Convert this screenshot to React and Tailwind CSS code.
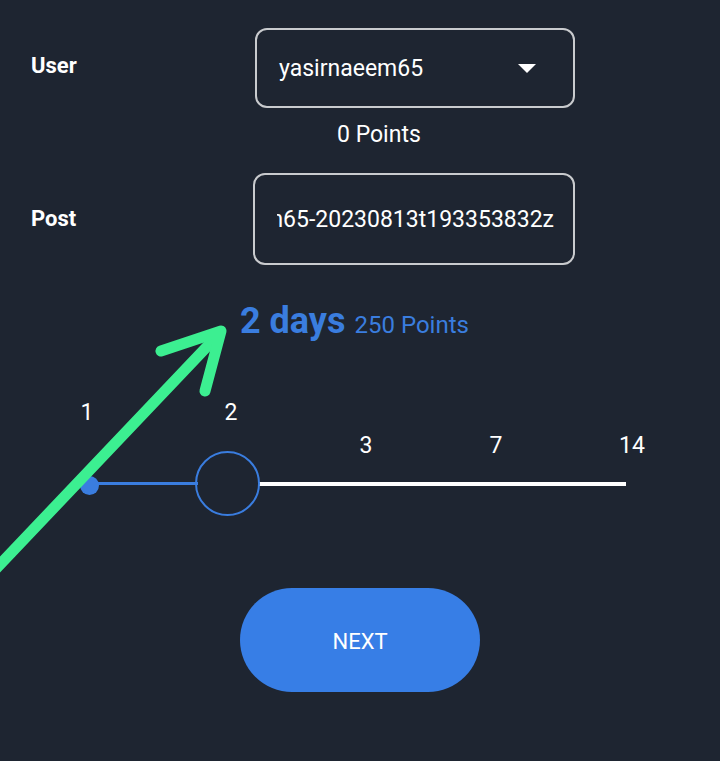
import React from "react";

export default function App() {
  const marks = [
    { v: "1", x: 87, y: 22 },
    { v: "2", x: 231, y: 22 },
    { v: "3", x: 366, y: 55 },
    { v: "7", x: 496, y: 55 },
    { v: "14", x: 632, y: 55 },
  ];
  return (
    <div
      className="relative w-[720px] h-[761px] bg-[#1e2531] overflow-hidden text-white"
      style={{ fontFamily: "Roboto, 'Noto Sans', sans-serif" }}
    >
      <div className="pt-[28px]">
        {/* User row */}
        <div className="flex items-center pl-[31px]">
          <div className="w-[224px] text-[22px] font-bold leading-none -mt-[4px]">User</div>
          <div className="w-[320px] h-[80px] rounded-[12px] border-2 border-[#c9cbce] flex items-center justify-between pl-[22px] pr-[37px]">
            <span className="text-[23px] leading-none">yasirnaeem65</span>
            <svg width="18" height="9" viewBox="0 0 18 9" className="mt-[1px]">
              <polygon points="0,0 18,0 9,9" fill="#ffffff" />
            </svg>
          </div>
        </div>
        <div className="pl-[337px] mt-[14px] text-[23px] leading-[26px]">0 Points</div>

        {/* Post row */}
        <div className="flex items-center pl-[31px] mt-[25px]">
          <div className="w-[222px] text-[22px] font-bold leading-none">Post</div>
          <div className="w-[322px] h-[92px] rounded-[12px] border-2 border-[#c9cbce] flex items-center pl-[22px] pr-[19px]">
            <div className="flex-1 overflow-hidden flex justify-end whitespace-nowrap">
              <span className="text-[23px] leading-none">yasirnaeem65-20230813t193353832z</span>
            </div>
          </div>
        </div>

        {/* Duration */}
        <div className="flex items-baseline gap-[9px] pl-[240px] mt-[35px] text-[#3a7ddf]">
          <span className="text-[36px] font-bold leading-[42px]">2 days</span>
          <span className="text-[24px] leading-none">250 Points</span>
        </div>

        {/* Slider */}
        <div className="relative h-[130px] mt-[48px]">
          {marks.map((m) => (
            <span
              key={m.v}
              className="absolute -translate-x-1/2 -translate-y-1/2 text-[23px] leading-none"
              style={{ left: m.x, top: m.y }}
            >
              {m.v}
            </span>
          ))}
          <div className="absolute left-[88px] top-[92px] w-[110px] h-[3px] bg-[#3a7ddf]" />
          <div className="absolute left-[258px] top-[92px] w-[368px] h-[4px] bg-white" />
          <div className="absolute left-[80px] top-[86px] w-[19px] h-[19px] rounded-full bg-[#3a7ddf]" />
          <div className="absolute left-[195px] top-[61px] w-[65px] h-[65px] rounded-full border-2 border-[#3a7ddf]" />
        </div>

        {/* Button */}
        <div className="flex justify-center mt-[68px]">
          <button className="w-[240px] h-[104px] rounded-full bg-[#377ee6] text-white text-[22px] leading-none pt-[4px]">
            NEXT
          </button>
        </div>
      </div>

      {/* Annotation arrow */}
      <svg
        className="absolute inset-0 pointer-events-none"
        width="720"
        height="761"
        viewBox="0 0 720 761"
      >
        <g stroke="#3cef91" strokeWidth="11" strokeLinecap="round" strokeLinejoin="round" fill="none">
          <line x1="-10" y1="575" x2="219" y2="334" />
          <polyline points="161,351 221,331 205,391" />
        </g>
      </svg>
    </div>
  );
}
